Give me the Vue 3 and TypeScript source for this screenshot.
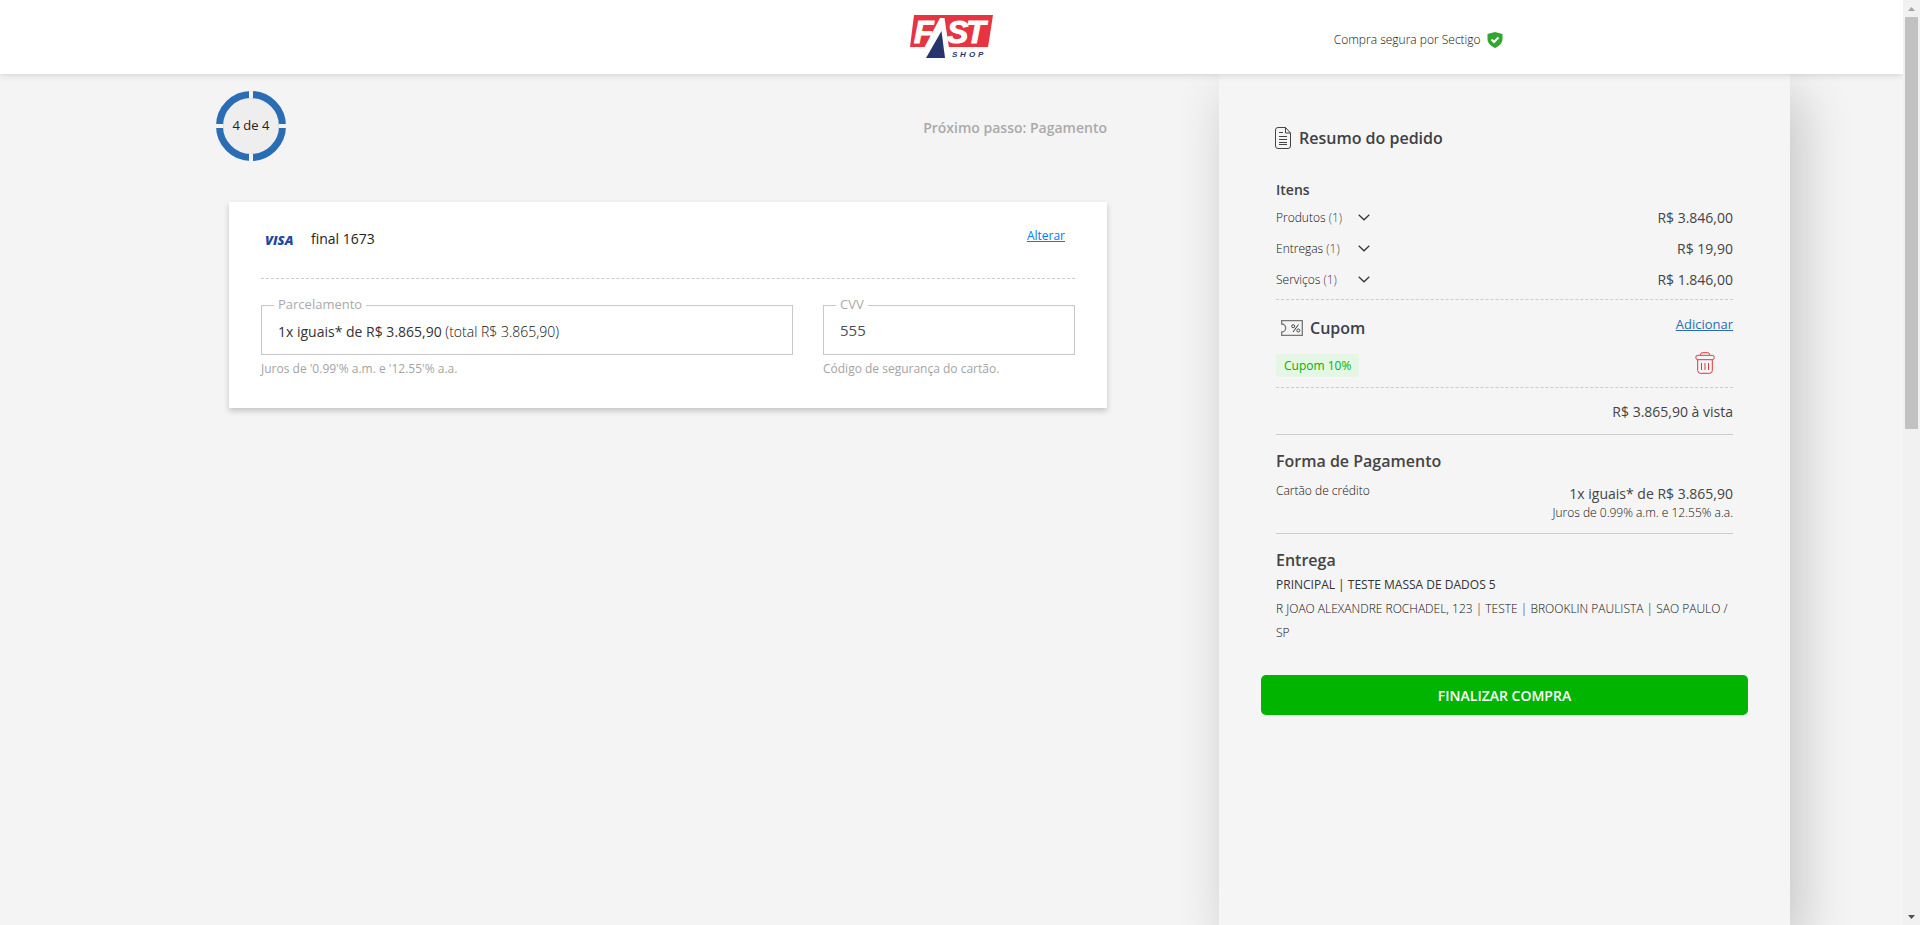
<script setup lang="ts">
import { ref } from 'vue'

interface SummaryRow {
  label: string
  count: number
  value: string
}

const rows: SummaryRow[] = [
  { label: 'Produtos', count: 1, value: 'R$ 3.846,00' },
  { label: 'Entregas', count: 1, value: 'R$ 19,90' },
  { label: 'Serviços', count: 1, value: 'R$ 1.846,00' },
]

const cvv = ref('555')
</script>

<template>
  <div class="viewport">
    <div class="page">
      <header class="topbar">
        <a class="logo" href="#" aria-label="Fast Shop">
          <svg width="83" height="44" viewBox="0 0 83 44">
            <path d="M4 0H83L78 32H0Z" fill="#e83441" />
            <g fill="#fff" stroke="#fff" font-family="Liberation Sans, Arial, sans-serif" font-weight="700" font-style="italic" font-size="32">
              <text x="4" y="28">F</text>
              <text x="37" y="28">S</text>
              <text x="56" y="28">T</text>
            </g>
            <path d="M30 3H34.500L39 33H14Z" fill="#fff" />
            <path d="M31.500 16L35 43H16Z" fill="#27356f" />
            <text y="42" fill="#27356f" font-family="Liberation Sans, Arial, sans-serif" font-weight="700" font-style="italic" font-size="8">
              <tspan x="42">S</tspan><tspan x="50">H</tspan><tspan x="59">O</tspan><tspan x="68">P</tspan>
            </text>
          </svg>
        </a>
        <p class="secure">
          Compra segura por Sectigo
          <svg width="16" height="16" viewBox="0 0 16 16" aria-hidden="true">
            <path d="M8 0L15.500 2V7C15.500 11 12.500 14 8 16C3.500 14 .5 11 .5 7V2Z" fill="#32a532" />
            <path d="M4.500 7.500L7 10L11.500 5.500" fill="none" stroke="#fff" stroke-width="2" />
          </svg>
        </p>
      </header>

      <main class="columns">
        <section class="checkout">
          <div class="steps">
            <div class="step-ring">
              <svg width="70" height="70" viewBox="0 0 70 70" aria-hidden="true">
                <circle cx="35" cy="35" r="28" fill="#eee" />
                <circle cx="35" cy="35" r="31.500" fill="none" stroke="#2a6db5" stroke-width="7" />
                <path d="M35 0V7M35 63V70M0 35H7M63 35H70" stroke="#f4f4f4" stroke-width="4" />
              </svg>
              <span class="step-text">4 de 4</span>
            </div>
            <p class="next-step">Próximo passo: Pagamento</p>
          </div>

          <article class="card">
            <div class="card-head">
              <svg class="visa" width="36" height="20" viewBox="0 0 36 20" role="img" aria-label="Visa">
                <text x="1" y="16" fill="#2547a0" font-family="Open Sans, sans-serif" font-weight="800" font-style="italic" font-size="13">VISA</text>
              </svg>
              <span class="card-number">final 1673</span>
              <a class="change" href="#">Alterar</a>
            </div>
            <form class="fields" @submit.prevent>
              <div class="field">
                <label for="installments">Parcelamento</label>
                <button id="installments" class="control" type="button" aria-haspopup="listbox">
                  1x iguais* de R$ 3.865,90 <span class="total">(total R$ 3.865,90)</span>
                </button>
                <p class="hint">Juros de '0.99'% a.m. e '12.55'% a.a.</p>
              </div>
              <div class="field">
                <label for="cvv">CVV</label>
                <input id="cvv" v-model="cvv" class="control" type="text" inputmode="numeric" />
                <p class="hint">Código de segurança do cartão.</p>
              </div>
            </form>
          </article>
        </section>

        <aside class="summary">
          <h1 class="summary-title">
            <svg width="16" height="22" viewBox="0 0 16 22" fill="none" stroke="#444" aria-hidden="true">
              <path d="M10.500 .5H3Q.5 .5 .5 3V19Q.5 21.500 3 21.500H13Q15.500 21.500 15.500 19V6Z" />
              <path d="M10.500 .5V6H15.500M4 5.500H8M4 9.500H12M4 12.500H12M4 15.500H12M4 17.500H12" />
            </svg>
            Resumo do pedido
          </h1>

          <h2 class="items-title">Itens</h2>
          <ul class="rows">
            <li v-for="row in rows" :key="row.label" class="row">
              <button class="row-toggle" type="button">
                <span>{{ row.label }} <span class="count">({{ row.count }})</span></span>
                <svg width="12" height="7" viewBox="0 0 12 7" aria-hidden="true">
                  <path d="M.7 .7L6 5.800L11.300 .7" fill="none" stroke="#333" stroke-width="1.200" />
                </svg>
              </button>
              <span class="amount">{{ row.value }}</span>
            </li>
          </ul>

          <div class="coupon">
            <div class="coupon-head">
              <h2 class="coupon-title">
                <svg width="22" height="16" viewBox="0 0 22 16" aria-hidden="true">
                  <path d="M.7 .7H21.300V15.300H.7V12A4 4 0 0 0 .7 4Z" fill="none" stroke="#777" stroke-width="1.300" />
                  <path d="M12 12L17.500 4.500" stroke="#333" />
                  <circle cx="12.200" cy="6.200" r="1.500" fill="none" stroke="#444" />
                  <circle cx="17.300" cy="10.500" r="1.500" fill="none" stroke="#444" />
                </svg>
                Cupom
              </h2>
              <a class="add" href="#">Adicionar</a>
            </div>
            <div class="coupon-body">
              <span class="tag">Cupom 10%</span>
              <button class="remove" type="button" aria-label="Remover cupom">
                <svg width="20" height="22" viewBox="0 0 20 22" fill="none" stroke="#e0353c" aria-hidden="true">
                  <path d="M5.500 3V2.500Q5.500 .7 7.500 .7H12.500Q14.500 .7 14.500 2.500V3" />
                  <rect x=".8" y="3.300" width="18.400" height="4.400" rx="2" />
                  <path d="M2.700 8V18.500Q2.700 21.300 5.500 21.300H14.500Q17.300 21.300 17.300 18.500V8" />
                  <path d="M6.500 11V18M10 11V18M13.500 11V18" />
                </svg>
              </button>
            </div>
          </div>

          <p class="cash">R$ 3.865,90 à vista</p>

          <section class="payment">
            <h2 class="section-title">Forma de Pagamento</h2>
            <div class="payment-row">
              <span>Cartão de crédito</span>
              <div class="payment-value">
                <p class="installment">1x iguais* de R$ 3.865,90</p>
                <p>Juros de 0.99% a.m. e 12.55% a.a.</p>
              </div>
            </div>
          </section>

          <section class="delivery">
            <h2 class="section-title">Entrega</h2>
            <p class="recipient">PRINCIPAL | TESTE MASSA DE DADOS 5</p>
            <p>R JOAO ALEXANDRE ROCHADEL, 123 | TESTE | BROOKLIN PAULISTA | SAO PAULO / SP</p>
          </section>

          <button class="finish" type="button">FINALIZAR COMPRA</button>
        </aside>
      </main>
    </div>

    <div class="scrollbar" aria-hidden="true">
      <svg width="17" height="17" viewBox="0 0 17 17"><path d="M5 11H12L8.500 7Z" fill="#a3a3a3" /></svg>
      <div class="track"><div class="thumb"></div></div>
      <svg width="17" height="17" viewBox="0 0 17 17"><path d="M5 7H12L8.500 11Z" fill="#505050" /></svg>
    </div>
  </div>
</template>

<style>
body {
  margin: 0;
}
</style>

<style scoped>
.viewport {
  display: flex;
  height: 100vh;
  overflow: hidden;
  background: #f4f4f4;
  color: #333;
  font-family: "Open Sans", sans-serif;
  font-size: 12px;
  line-height: 16px;
}
.viewport * {
  box-sizing: border-box;
}
h1, h2, p, ul {
  margin: 0;
  padding: 0;
  font-weight: inherit;
}
button, input {
  font-family: inherit;
  color: inherit;
}
button {
  border: 0;
  padding: 0;
  background: none;
  cursor: pointer;
}
svg {
  flex: none;
  display: block;
}
.page {
  flex: 1;
  min-width: 0;
  display: flex;
  flex-direction: column;
  overflow: hidden;
}
.topbar {
  position: relative;
  z-index: 1;
  display: grid;
  grid-template-columns: 1fr auto 1fr;
  align-items: center;
  height: 74px;
  flex: none;
  background: #fff;
  box-shadow: 0 0 8px rgba(0, 0, 0, 0.18);
}
.logo {
  grid-column: 2;
}
.secure {
  display: flex;
  align-items: center;
  justify-self: end;
  gap: 6px;
  padding: 6px 44% 0 0;
  color: #111;
  font-weight: 300;
  white-space: nowrap;
}
.columns {
  flex: 1;
  display: grid;
  grid-template-columns: 229fr 878fr 112fr 571fr 113fr;
}
.checkout {
  grid-column: 2;
}
.steps {
  display: flex;
  align-items: center;
  justify-content: space-between;
  margin: 17px 0 41px -13px;
}
.step-ring {
  display: grid;
  place-items: center;
}
.step-ring > * {
  grid-area: 1 / 1;
}
.step-text {
  padding-bottom: 2px;
  font-size: 13px;
  color: #222;
}
.next-step {
  padding-top: 4px;
  font-size: 14px;
  font-weight: 600;
  color: #aaa;
}
.card {
  padding: 0 32px 31px;
  background: #fff;
  box-shadow: 0 3px 6px rgba(0, 0, 0, 0.2);
}
.card-head {
  display: flex;
  align-items: center;
  height: 77px;
  padding: 0 10px 3px 3px;
  border-bottom: 1px dashed #ccc;
}
.visa {
  margin-right: 11px;
}
.card-number {
  font-size: 14px;
  color: #222;
}
.change {
  margin: 0 0 6px auto;
  color: #007bff;
}
.fields {
  display: grid;
  grid-template-columns: 532fr 252fr;
  gap: 30px;
  padding-top: 26px;
}
.field {
  position: relative;
}
.field label {
  position: absolute;
  top: -9px;
  left: 13px;
  padding: 0 4px;
  background: #fff;
  color: #aaa;
  font-size: 13px;
}
.control {
  display: block;
  width: 100%;
  height: 50px;
  padding: 2px 16px 0;
  border: 1px solid #c8c8c8;
  border-radius: 0;
  background: #fff;
  text-align: left;
  font-size: 14px;
}
input.control {
  padding-top: 0;
  font-size: 15px;
  color: #495057;
}
.total {
  color: #111;
  font-weight: 300;
}
.hint {
  padding-top: 6px;
  color: #a4a4a4;
}
.summary {
  grid-column: 4;
  padding: 52px 57px 0;
  background: #f5f5f5;
  box-shadow: 10px 20px 50px rgba(0, 0, 0, 0.2);
  color: #111;
  font-weight: 300;
}
.summary-title {
  display: flex;
  align-items: center;
  gap: 8px;
  margin-left: -1px;
  color: #3c4146;
  font-size: 16px;
  line-height: 24px;
  font-weight: 600;
}
.items-title {
  margin-top: 30px;
  color: #3c4146;
  font-size: 14px;
  line-height: 20px;
  font-weight: 600;
}
.rows {
  list-style: none;
  padding: 2px 0 4px;
  border-bottom: 1px dashed #ccc;
}
.row {
  display: flex;
  align-items: center;
  justify-content: space-between;
  height: 31px;
}
.row-toggle {
  display: flex;
  align-items: center;
  justify-content: space-between;
  width: 94px;
  font-size: 12px;
  font-weight: 300;
}
.count {
  color: #444;
}
.amount, .cash, .installment {
  color: #444;
  font-size: 14px;
  font-weight: 400;
}
.coupon {
  height: 88px;
  border-bottom: 1px dashed #ccc;
}
.coupon-head, .coupon-body {
  display: flex;
  justify-content: space-between;
}
.coupon-head {
  padding-top: 16px;
}
.coupon-title {
  display: flex;
  align-items: center;
  gap: 7px;
  padding-left: 5px;
  color: #3c4146;
  font-size: 16px;
  line-height: 24px;
  font-weight: 600;
}
.add {
  color: #2a6db5;
  font-size: 13px;
  font-weight: 400;
}
.coupon-body {
  align-items: flex-start;
  padding: 12px 18px 0 0;
}
.tag {
  margin-top: 2px;
  padding: 0 8px;
  border-radius: 3px;
  background: #e4f7e4;
  color: #00b400;
  line-height: 23px;
  font-weight: 400;
}
.cash {
  padding: 14px 0 12px;
  line-height: 20px;
  border-bottom: 1px solid #ccc;
  text-align: right;
}
.section-title {
  color: #444;
  font-size: 16px;
  line-height: 24px;
  font-weight: 600;
}
.payment {
  padding: 14px 0 12px;
  border-bottom: 1px solid #ccc;
}
.payment-row {
  display: flex;
  justify-content: space-between;
  padding-top: 10px;
}
.payment-value {
  text-align: right;
}
.installment {
  line-height: 22px;
}
.delivery {
  padding-top: 14px;
  line-height: 24px;
}
.recipient {
  padding-top: 1px;
  color: #333;
  font-weight: 400;
}
.finish {
  display: block;
  width: calc(100% + 30px);
  height: 40px;
  margin: 30px -15px 0;
  border-radius: 5px;
  background: #00b400;
  color: #fff;
  font-size: 14px;
  font-weight: 600;
}
.scrollbar {
  display: flex;
  flex-direction: column;
  width: 17px;
  background: #f1f1f1;
}
.track {
  flex: 1;
  display: grid;
  grid-template-rows: 412fr 479fr;
  padding: 0 2px;
}
.thumb {
  background: #c1c1c1;
}
</style>
